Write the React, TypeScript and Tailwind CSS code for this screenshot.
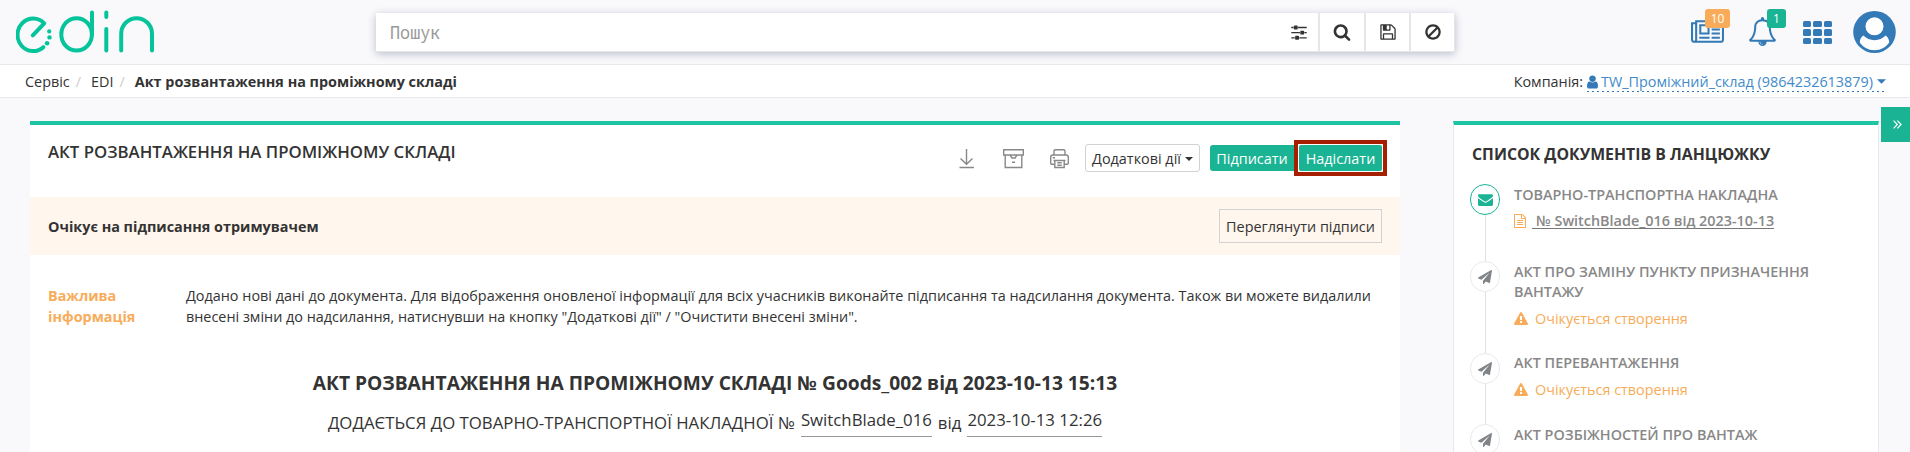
import type { ReactNode } from 'react';

const icons = {
  sliders:
    'M480 1408v128h-352v-128h352zm352-128q26 0 45 19t19 45v256q0 26-19 45t-45 19h-256q-26 0-45-19t-19-45v-256q0-26 19-45t45-19h256zm160-384v128h-864v-128h864zm-640-512v128h-224v-128h224zm1312 1024v128h-736v-128h736zm-960-1152q26 0 45 19t19 45v256q0 26-19 45t-45 19h-256q-26 0-45-19t-19-45v-256q0-26 19-45t45-19h256zm640 512q26 0 45 19t19 45v256q0 26-19 45t-45 19h-256q-26 0-45-19t-19-45v-256q0-26 19-45t45-19h256zm320 128v128h-224v-128h224zm0-512v128h-864v-128h864z',
  search:
    'M1216 832q0-185-131.5-316.5t-316.5-131.5-316.5 131.5-131.5 316.5 131.5 316.5 316.5 131.5 316.5-131.5 131.5-316.5zm512 832q0 52-38 90t-90 38q-54 0-90-38l-343-342q-179 124-399 124-143 0-273.5-55.5t-225-150-150-225-55.5-273.5 55.5-273.5 150-225 225-150 273.5-55.5 273.5 55.5 225 150 150 225 55.5 273.5q0 220-124 399l343 343q37 37 37 90z',
  floppy:
    'M512 1536h768v-384h-768v384zm896 0h128v-896q0-14-10-38.5t-20-34.5l-281-281q-10-10-34-20t-39-10v416q0 40-28 68t-68 28h-576q-40 0-68-28t-28-68v-416h-128v1280h128v-416q0-40 28-68t68-28h832q40 0 68 28t28 68v416zm-384-928v-320q0-13-9.5-22.5t-22.5-9.5h-192q-13 0-22.5 9.5t-9.5 22.5v320q0 13 9.5 22.5t22.5 9.5h192q13 0 22.5-9.5t9.5-22.5zm640 32v928q0 40-28 68t-68 28h-1344q-40 0-68-28t-28-68v-1344q0-40 28-68t68-28h928q40 0 88 20t76 48l280 280q28 28 48 76t20 88z',
  ban: 'M1440 893q0-161-87-295l-754 753q137 89 297 89 111 0 211.5-43.5t173.5-116.5 116-174.5 43-212.5zm-999 299l755-754q-135-91-300-91-148 0-273 73t-198 199-73 274q0 162 89 299zm1223-299q0 157-61 300t-163.5 246-245 164-298.5 61-298.5-61-245-164-163.5-246-61-300 61-299.5 163.5-245.5 245-164 298.5-61 298.5 61 245 164 163.5 245.5 61 299.5z',
  newspaper:
    'M1024 512h-384v384h384v-384zm128 640v128h-640v-128h640zm0-768v640h-640v-640h640zm640 768v128h-512v-128h512zm0-256v128h-512v-128h512zm0-256v128h-512v-128h512zm0-256v128h-512v-128h512zm-1536 960v-960h-128v960q0 26 19 45t45 19 45-19 19-45zm1664 0v-1088h-1536v1088q0 33-11 64h1483q26 0 45-19t19-45zm128-1216v1216q0 80-56 136t-136 56h-1664q-80 0-136-56t-56-136v-1088h256v-128h1792z',
  bell: 'M912 1696q0-16-16-16-59 0-101.5-42.5t-42.5-101.5q0-16-16-16t-16 16q0 73 51.5 124.5t124.5 51.5q16 0 16-16zm-666-288h1300q-266-300-266-832 0-51-24-105t-69-103-121.5-80.5-169.5-31.5-169.5 31.5-121.5 80.5-69 103-24 105q0 532-266 832zm1482 0q0 52-38 90t-90 38h-448q0 106-75 181t-181 75-181-75-75-181h-448q-52 0-90-38t-38-90q50-42 91-88t85-119.5 74.5-158.5 50-206 19.5-260q0-152 117-282.5t307-158.5q-8-19-8-39 0-40 28-68t68-28 68 28 28 68q0 20-8 39 190 28 307 158.5t117 282.5q0 139 19.5 260t50 206 74.5 158.5 85 119.5 91 88z',
  user: 'M1536 1399q0 109-62.5 187t-150.5 78h-854q-88 0-150.5-78t-62.5-187q0-85 8.5-160.5t31.5-152 58.5-131 94-89 134.5-34.5q131 128 313 128t313-128q76 0 134.5 34.5t94 89 58.5 131 31.5 152 8.5 160.5zm-256-887q0 159-112.5 271.5t-271.5 112.5-271.5-112.5-112.5-271.5 112.5-271.5 271.5-112.5 271.5 112.5 112.5 271.5z',
  envelope:
    'M1792 710v794q0 66-47 113t-113 47h-1472q-66 0-113-47t-47-113v-794q44 49 101 87 362 246 497 345 57 42 92.5 65.5t94.5 48 110 24.5h2q51 0 110-24.5t94.5-48 92.5-65.5q170-123 498-345 57-39 100-87zm0-294q0 79-49 151t-122 123q-376 261-468 325-10 7-42.5 31t-54 38.5-52 32.5-57.5 27-50 9h-2q-23 0-50-9t-57.5-27-52-32.5-54-38.5-42.5-31q-91-64-262-182.5t-205-142.5q-62-42-117-115.5t-55-136.5q0-78 41.5-130t118.5-52h1472q65 0 112.5 47t47.5 113z',
  plane:
    'M1764 11q33 24 27 64l-256 1536q-5 29-32 45-14 8-31 8-11 0-24-5l-453-185-242 295q-18 23-49 23-13 0-22-4-19-7-30.5-23.5t-11.5-36.5v-349l864-1059-1069 925-395-162q-37-14-40-55-2-40 32-59l1664-960q15-9 32-9 20 0 36 11z',
  warning:
    'M1024 1375v-190q0-14-9.5-23.5t-22.5-9.5h-192q-13 0-22.5 9.5t-9.5 23.5v190q0 14 9.5 23.5t22.5 9.5h192q13 0 22.5-9.5t9.5-23.5zm-2-374l18-459q0-12-10-19-13-11-24-11h-220q-11 0-24 11-10 7-10 21l17 457q0 10 10 16.5t24 6.5h185q14 0 23.5-6.5t10.5-16.5zm-14-934l768 1408q35 63-2 126-17 29-46.5 46t-63.5 17h-1536q-34 0-63.5-17t-46.5-46q-37-63-2-126l768-1408q17-31 47-49t65-18 65 18 47 49z',
  file: 'M1596 380q28 28 48 76t20 88v1152q0 40-28 68t-68 28h-1344q-40 0-68-28t-28-68v-1600q0-40 28-68t68-28h896q40 0 88 20t76 48zm-444-244v376h376q-10-29-22-41l-313-313q-12-12-41-22zm384 1528v-1024h-416q-40 0-68-28t-28-68v-416h-768v1536h1280zm-1024-864q0-14 9-23t23-9h704q14 0 23 9t9 23v64q0 14-9 23t-23 9h-704q-14 0-23-9t-9-23v-64zm736 224q14 0 23 9t9 23v64q0 14-9 23t-23 9h-704q-14 0-23-9t-9-23v-64q0-14 9-23t23-9h704zm0 256q14 0 23 9t9 23v64q0 14-9 23t-23 9h-704q-14 0-23-9t-9-23v-64q0-14 9-23t23-9h704z',
};

type IconName = keyof typeof icons;

function Icon({ name, className, box = '0 0 1792 1792' }: { name: IconName; className: string; box?: string }) {
  return (
    <svg viewBox={box} className={`shrink-0 ${className}`} fill="currentColor" aria-hidden="true">
      <path d={icons[name]} />
    </svg>
  );
}

function Logo() {
  return (
    <svg className="ml-4 mt-[10px] h-[44px] w-[140px] shrink-0" viewBox="16 10 140 44" fill="none" stroke="#05c49b" strokeWidth="4" strokeLinecap="round" strokeLinejoin="round">
      <path d="M32.8 35.3L44.2 23.3A15.6 16.3 0 1 0 43.3 47.2" />
      <ellipse cx="76.6" cy="34.4" rx="15.3" ry="16.2" />
      <path d="M92 12.4V35M106.3 12.6V17M106.3 29V50.6M121.2 50.6V33.8A15.4 15.6 0 0 1 152 33.8V50.6" />
      <g fill="#05c49b" stroke="none">
        <circle cx="49.2" cy="31.4" r="2.1" />
        <circle cx="49.5" cy="37.4" r="2.2" />
        <circle cx="47.1" cy="43.2" r="2.3" />
      </g>
    </svg>
  );
}

function Caret({ className }: { className: string }) {
  return (
    <svg viewBox="0 0 8 4" className={`shrink-0 ${className}`} fill="currentColor">
      <path d="M0 0H8L4 4Z" />
    </svg>
  );
}

function Header() {
  return (
    <header className="flex h-[65px] border-b border-[#e7eaec]">
      <Logo />
      <div className="ml-[220px] mt-[13px] flex h-[39px] w-[1079px] shrink-0 border-r border-b border-[#e5e6e7] bg-white text-[#333] shadow-[0_2px_8px_rgba(30,40,90,0.28)]">
        <div className="flex flex-1 items-center justify-between pr-[10px] pl-[14px]">
          <span className="scale-y-110 font-['Noto_Sans_Mono','DejaVu_Sans_Mono',monospace] text-[16.8px] leading-6 text-[#999]">Пошук</span>
          <Icon name="sliders" className="h-[18px] w-[18px]" />
        </div>
        <div className="flex w-[46px] items-center justify-center border-l-2 border-[#e5e6e7]"><Icon name="search" className="h-[18px] w-[18px]" /></div>
        <div className="flex w-[45px] items-center justify-center border-l-2 border-[#e5e6e7]"><Icon name="floppy" className="h-[18px] w-[18px]" /></div>
        <div className="flex w-[45px] items-center justify-center border-l-2 border-[#e5e6e7]"><Icon name="ban" className="h-[18px] w-[18px]" /></div>
      </div>
      <div className="ml-auto flex text-[#337ab7]">
        <div className="relative mt-[18px] h-[29px] w-[33px]">
          <Icon name="newspaper" box="0 0 2048 1792" className="h-[29px] w-[33px]" />
          <span className="absolute -top-[9px] left-[14px] flex h-[19px] w-[25px] items-center justify-center rounded-[3px] bg-[#f8ac59] text-[12px] font-medium text-white">10</span>
        </div>
        <div className="relative ml-[24px] mt-[17px] h-[29px] w-[29px]">
          <Icon name="bell" className="h-[29px] w-[29px]" />
          <span className="absolute -top-[8px] left-[19px] flex h-[19px] w-[19px] items-center justify-center rounded-[3px] bg-[#1ab394] text-[12px] font-medium text-white">1</span>
        </div>
        <div className="ml-[26px] mt-[21px] grid h-[23px] w-[29px] grid-cols-3 gap-x-[2px] gap-y-[2px]">
          {Array.from({ length: 9 }, (_, i) => (
            <span key={i} className="rounded-[1.5px] bg-[#337ab7]" />
          ))}
        </div>
        <svg className="ml-[21px] mr-[14px] mt-[11px] h-[42px] w-[43px]" viewBox="0 0 43 42">
          <ellipse cx="21.5" cy="21" rx="21.3" ry="21" fill="#337ab7" />
          <path d="M10.4 24.6C7.6 26.4 7 29.4 6.7 31.2C9.7 36 15.3 39.2 21.5 39.2C27.7 39.2 33.3 36 36.3 31.2C36 29.4 35.4 26.4 32.6 24.6C29.5 27.5 26 29.3 21.5 29.3C17 29.3 13.5 27.5 10.4 24.6Z" fill="#fff" />
          <circle cx="21.5" cy="15.3" r="10.3" fill="#337ab7" />
          <circle cx="21.5" cy="15.3" r="9" fill="#fff" />
        </svg>
      </div>
    </header>
  );
}

function Breadcrumb() {
  return (
    <nav className="flex h-[33px] items-center border-b border-[#e7eaec] bg-white pt-px pr-[24px] pl-[25px]">
      <span>Сервіс</span>
      <span className="ml-[6px] text-[#ccc]">/</span>
      <span className="ml-[10px]">EDI</span>
      <span className="ml-[6px] text-[#ccc]">/</span>
      <strong className="ml-[10px]">Акт розвантаження на проміжному складі</strong>
      <span className="ml-auto">Компанія:</span>
      <span className="relative ml-1 flex items-center text-[#428bca]">
        <Icon name="user" className="h-[14px] w-[11px] text-[#337ab7]" box="256 128 1280 1536" />
        <span className="ml-[3px]">TW_Проміжний_склад (9864232613879)</span>
        <Caret className="ml-1 h-[5px] w-[9px] text-[#337ab7]" />
        <svg className="absolute bottom-0 left-0 h-px w-full" preserveAspectRatio="none">
          <line x1="0" y1="0.5" x2="100%" y2="0.5" stroke="#337ab7" strokeDasharray="2 3" />
        </svg>
      </span>
    </nav>
  );
}

function DocumentPanel() {
  return (
    <main className="ml-[30px] h-[331px] w-[1370px] border-t-4 border-[#1fc4a4] bg-white">
      <div className="flex h-[72px]">
        <h1 className="mt-[15px] ml-[18px] text-[16.8px] leading-6 font-semibold">АКТ РОЗВАНТАЖЕННЯ НА ПРОМІЖНОМУ СКЛАДІ</h1>
        <div className="mr-[18px] ml-auto flex items-start">
          <svg className="mt-[24px] h-[21px] w-[16px]" viewBox="0 0 16 21" fill="none" stroke="#888" strokeWidth="1.4">
            <path d="M7.5 0V15M1.5 9.5L7.5 15.3L13.5 9.5M0.5 18.5H15" />
          </svg>
          <svg className="mt-[24px] ml-[28px] h-[21px] w-[21px]" viewBox="0 0 21 21" fill="none" stroke="#888" strokeWidth="1.4">
            <path d="M0.7 0.8H20.3V6H0.7ZM2.2 6V18.5H18.8V6M7 6.2L9 9H12L14 6.2M9 13.2H12" />
          </svg>
          <svg className="mt-[24px] ml-[26px] h-[20px] w-[19px]" viewBox="0 0 19 20" fill="none" stroke="#888" strokeWidth="1.4">
            <path d="M4 5.8V2.2Q4 .7 5.5 .7H13.5Q15 .7 15 2.2V5.8M4.5 15.2H1.9Q.7 15.2 .7 14V8.2Q.7 6 2.9 6H16.1Q18.3 6 18.3 8.2V14Q18.3 15.2 17.1 15.2H14.5M2.8 8.7H5M3.5 11.5H15.5M4.8 11.5V18.5H14.2V11.5M7.3 13.8H11.7M7.3 16.2H11.7" />
          </svg>
          <button className="mt-[19px] ml-[16px] flex h-[28px] w-[115px] items-center justify-center rounded-[3px] border border-[#d2d2d2] bg-white pt-px whitespace-nowrap">
            Додаткові дії<Caret className="mt-px ml-1 h-1 w-2" />
          </button>
          <button className="mt-[20px] ml-[10px] h-[26px] w-[84px] rounded-l-[3px] bg-[#1ab394] pt-px text-white">Підписати</button>
          <div className="mt-[15px] -mr-[5px] h-[36px] w-[93px] border-4 border-[#a51f00] p-px">
            <button className="h-[26px] w-[83px] rounded-[2px] bg-[#1ab394] pt-px text-white">Надіслати</button>
          </div>
        </div>
      </div>
      <div className="flex h-[58px] items-center justify-between bg-[#fff6ed] px-[18px]">
        <strong className="pt-[2px]">Очікує на підписання отримувачем</strong>
        <button className="h-[34px] w-[163px] border border-[#d2d2d2] pt-px whitespace-nowrap">Переглянути підписи</button>
      </div>
      <div className="mt-[30px] ml-[18px] flex leading-[21px]">
        <strong className="w-[138px] text-[#f8ac59]">Важлива<br />інформація</strong>
        <p className="w-[1200px]">
          Додано нові дані до документа. Для відображення оновленої інформації для всіх учасників виконайте підписання та надсилання документа. Також ви можете видалили
          <br />
          внесені зміни до надсилання, натиснувши на кнопку "Додаткові дії" / "Очистити внесені зміни".
        </p>
      </div>
      <h2 className="mt-[44px] text-center text-[19.2px] leading-6 font-bold">АКТ РОЗВАНТАЖЕННЯ НА ПРОМІЖНОМУ СКЛАДІ № Goods_002 від 2023-10-13 15:13</h2>
      <div className="mt-[13px] flex h-[31px] justify-center text-[16.8px] leading-6">
        <span className="mt-[3px]">ДОДАЄТЬСЯ ДО ТОВАРНО-ТРАНСПОРТНОЇ НАКЛАДНОЇ №</span>
        <span className="ml-[6px] h-[29px] border-b border-[#999]">SwitchBlade_016</span>
        <span className="mx-[6px] mt-[3px]">від</span>
        <span className="h-[29px] border-b border-[#999]">2023-10-13 12:26</span>
      </div>
    </main>
  );
}

function ChainItem({ done, title, height, children }: { done?: boolean; title: ReactNode; height: string; children?: ReactNode }) {
  return (
    <li className={`flex ${height}`}>
      <div className="flex w-[30px] shrink-0 flex-col items-center">
        <span className={`flex h-[31px] w-[30px] shrink-0 items-center justify-center rounded-full border ${done ? 'border-[#1ab394] text-[#1ab394]' : 'border-[#e7eaec] text-[#808488]'}`}>
          <Icon name={done ? 'envelope' : 'plane'} className={done ? 'h-[15px] w-[15px]' : 'h-[14px] w-[14px]'} />
        </span>
        <span className="w-px flex-1 bg-[#e0e2e4]" />
      </div>
      <div className="ml-[14px] pt-px">
        <div className="leading-5 font-semibold text-[#888]">{title}</div>
        {children}
      </div>
    </li>
  );
}

function Pending() {
  return (
    <div className="mt-[7px] flex items-center text-[#f8ac59]">
      <Icon name="warning" className="h-[14px] w-[14px]" />
      <span className="ml-[7px]">Очікується створення</span>
    </div>
  );
}

function ChainPanel() {
  return (
    <aside className="ml-[53px] h-[331px] w-[426px] border-x border-t-4 border-x-[#e7eaec] border-t-[#1fc4a4] bg-white">
      <h2 className="mt-[17px] ml-[18px] text-[15.84px] leading-6 font-bold">СПИСОК ДОКУМЕНТІВ В ЛАНЦЮЖКУ</h2>
      <ul className="mt-[18px] ml-[16px]">
        <ChainItem done title="ТОВАРНО-ТРАНСПОРТНА НАКЛАДНА" height="h-[77px]">
          <div className="mt-[8px] flex items-center text-[#888]">
            <Icon name="file" className="h-[14px] w-[12px] text-[#f8ac59]" box="128 0 1536 1792" />
            <span className="ml-[6px] border-b border-[#777] pl-1 leading-[15px] font-semibold">№ SwitchBlade_016 від 2023-10-13</span>
          </div>
        </ChainItem>
        <ChainItem title={<>АКТ ПРО ЗАМІНУ ПУНКТУ ПРИЗНАЧЕННЯ<br />ВАНТАЖУ</>} height="h-[92px]"><Pending /></ChainItem>
        <ChainItem title={<div className="-mt-px">АКТ ПЕРЕВАНТАЖЕННЯ</div>} height="h-[71px]"><Pending /></ChainItem>
        <ChainItem title="АКТ РОЗБІЖНОСТЕЙ ПРО ВАНТАЖ" height="h-[71px]" />
      </ul>
    </aside>
  );
}

export default function App() {
  return (
    <div className="h-[452px] w-[1910px] overflow-hidden bg-[#f9f9fb] font-['Open_Sans',sans-serif] text-[14.4px] leading-5 text-[#333]">
      <Header />
      <Breadcrumb />
      <div className="flex">
        <div className="mt-[23px] flex">
          <DocumentPanel />
          <ChainPanel />
        </div>
        <button className="mt-[9px] ml-auto flex h-[35px] w-[29px] items-center justify-center bg-[#1ab394] pl-[3px] text-white">
          <svg viewBox="0 0 9 9" className="h-[9px] w-[9px]" fill="none" stroke="currentColor" strokeWidth="1.2">
            <path d="M.6 .7L4.3 4.5L.6 8.3M4.4 .7L8.1 4.5L4.4 8.3" />
          </svg>
        </button>
      </div>
    </div>
  );
}
